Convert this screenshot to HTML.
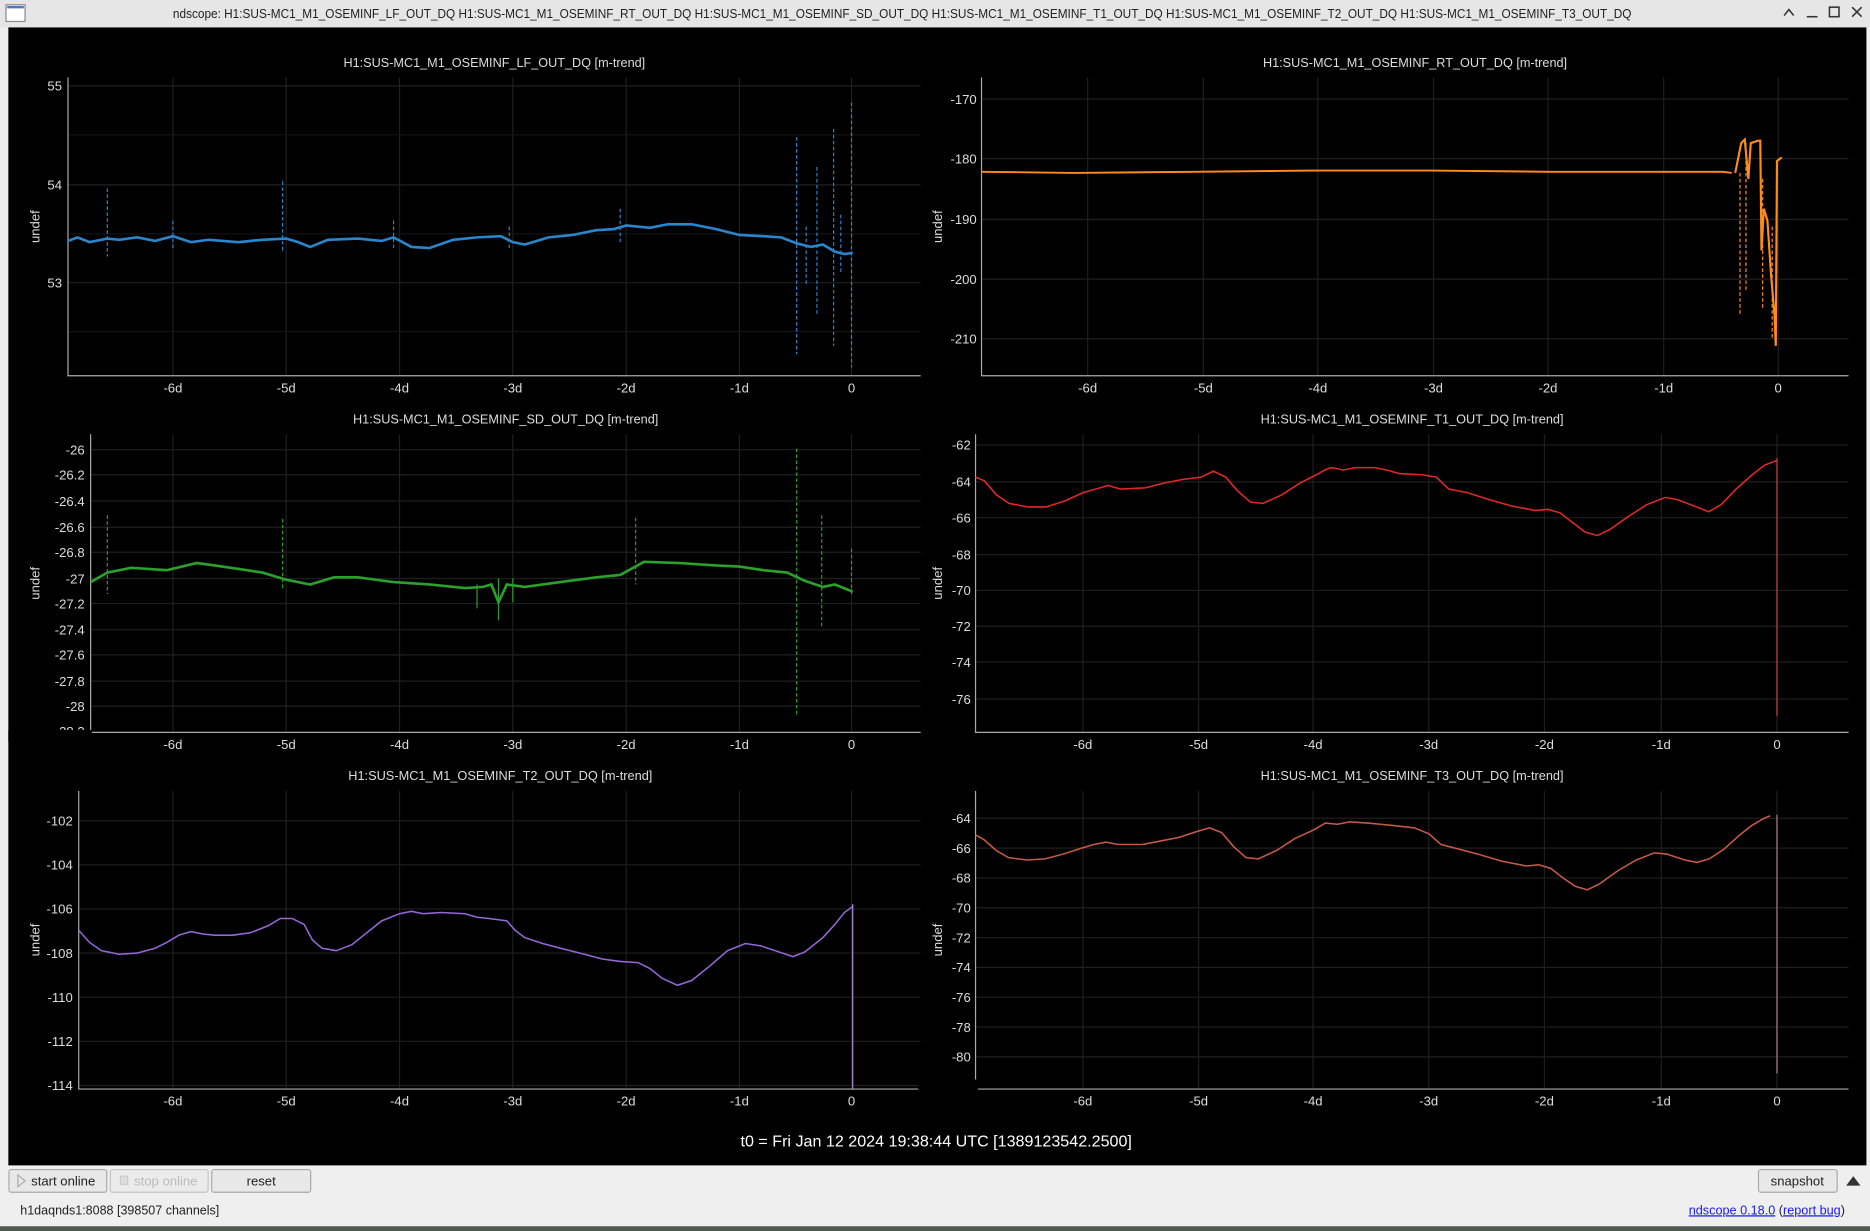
<!DOCTYPE html>
<html><head><meta charset="utf-8"><style>
html,body{margin:0;padding:0;width:1870px;height:1231px;overflow:hidden;background:#efefef;}
svg{display:block}
</style></head><body>
<svg width="1870" height="1231" viewBox="0 0 1568 1032" preserveAspectRatio="none" font-family="Liberation Sans, DejaVu Sans, sans-serif">
<rect x="0" y="0" width="1568" height="23" fill="#e6e6e6"/>
<rect x="5" y="4" width="16" height="14" fill="#fff" stroke="#888" stroke-width="1"/>
<rect x="6" y="5" width="14" height="2" fill="#4a7ac0"/>
<text x="145" y="15" font-size="11" fill="#222" textLength="1223" lengthAdjust="spacingAndGlyphs">ndscope: H1:SUS-MC1_M1_OSEMINF_LF_OUT_DQ H1:SUS-MC1_M1_OSEMINF_RT_OUT_DQ H1:SUS-MC1_M1_OSEMINF_SD_OUT_DQ H1:SUS-MC1_M1_OSEMINF_T1_OUT_DQ H1:SUS-MC1_M1_OSEMINF_T2_OUT_DQ H1:SUS-MC1_M1_OSEMINF_T3_OUT_DQ</text>
<g stroke="#333" stroke-width="1.3" fill="none">
<path d="M1496 13 L1500 8 L1504 13"/><path d="M1515 14 H1524"/><rect x="1534" y="6" width="8" height="8"/><path d="M1553 6 L1561 14 M1561 6 L1553 14"/>
</g>
<rect x="7" y="23" width="1558" height="954" fill="#000"/>

<g font-size="11" fill="#ddd">
<text x="288" y="56" textLength="253" lengthAdjust="spacingAndGlyphs">H1:SUS-MC1_M1_OSEMINF_LF_OUT_DQ [m-trend]</text>
<text x="1059" y="56" textLength="255" lengthAdjust="spacingAndGlyphs">H1:SUS-MC1_M1_OSEMINF_RT_OUT_DQ [m-trend]</text>
<text x="296" y="355" textLength="256" lengthAdjust="spacingAndGlyphs">H1:SUS-MC1_M1_OSEMINF_SD_OUT_DQ [m-trend]</text>
<text x="1057" y="355" textLength="254" lengthAdjust="spacingAndGlyphs">H1:SUS-MC1_M1_OSEMINF_T1_OUT_DQ [m-trend]</text>
<text x="292" y="654" textLength="255" lengthAdjust="spacingAndGlyphs">H1:SUS-MC1_M1_OSEMINF_T2_OUT_DQ [m-trend]</text>
<text x="1057" y="654" textLength="254" lengthAdjust="spacingAndGlyphs">H1:SUS-MC1_M1_OSEMINF_T3_OUT_DQ [m-trend]</text>
</g>

<g stroke="#1f1f1f" stroke-width="1">
<path d="M145 65V315M240 65V315M335 65V315M430 65V315M525 65V315M620 65V315M714 65V315"/>
<path d="M145 364V614M240 364V614M335 364V614M430 364V614M525 364V614M620 364V614M714 364V614"/>
<path d="M145 663V913M240 663V913M335 663V913M430 663V913M525 663V913M620 663V913M714 663V913"/>
<path d="M912 65V315M1009 65V315M1105 65V315M1202 65V315M1298 65V315M1395 65V315M1491 65V315"/>
<path d="M908 364V614M1005 364V614M1101 364V614M1198 364V614M1295 364V614M1393 364V614M1490 364V614"/>
<path d="M908 663V913M1005 663V913M1101 663V913M1198 663V913M1295 663V913M1393 663V913M1490 663V913"/>
<path d="M57 72H772M57 155H772M57 237H772"/>
<path d="M823 83H1550M823 133H1550M823 184H1550M823 234H1550M823 284H1550"/>
<path d="M76 377H772M76 398H772M76 420H772M76 442H772M76 463H772M76 485H772M76 506H772M76 528H772M76 549H772M76 571H772M76 592H772"/>
<path d="M818 373H1550M818 404H1550M818 434H1550M818 465H1550M818 495H1550M818 525H1550M818 555H1550M818 586H1550"/>
<path d="M66 688H772M66 725H772M66 762H772M66 799H772M66 836H772M66 873H772M66 910H772"/>
<path d="M818 686H1550M818 711H1550M818 736H1550M818 761H1550M818 786H1550M818 811H1550M818 836H1550M818 861H1550M818 886H1550"/>
</g>
<g stroke="#141414" stroke-width="1"><path d="M57 113H772M57 196H772M57 278H772"/></g>

<g stroke="#aaa" stroke-width="1" fill="none">
<path d="M57 65V315H772"/><path d="M823 65V315H1550"/>
<path d="M76 364V614H772"/><path d="M818 364V614H1550"/>
<path d="M66 663V913H772"/><path d="M818 663V913H1550"/>
</g>

<g font-size="11" fill="#ddd" text-anchor="middle">
<g><text x="145" y="329">-6d</text><text x="240" y="329">-5d</text><text x="335" y="329">-4d</text><text x="430" y="329">-3d</text><text x="525" y="329">-2d</text><text x="620" y="329">-1d</text><text x="714" y="329">0</text></g>
<g transform="translate(0,299)"><text x="145" y="329">-6d</text><text x="240" y="329">-5d</text><text x="335" y="329">-4d</text><text x="430" y="329">-3d</text><text x="525" y="329">-2d</text><text x="620" y="329">-1d</text><text x="714" y="329">0</text></g>
<g transform="translate(0,598)"><text x="145" y="329">-6d</text><text x="240" y="329">-5d</text><text x="335" y="329">-4d</text><text x="430" y="329">-3d</text><text x="525" y="329">-2d</text><text x="620" y="329">-1d</text><text x="714" y="329">0</text></g>
<text x="912" y="329">-6d</text><text x="1009" y="329">-5d</text><text x="1105" y="329">-4d</text><text x="1202" y="329">-3d</text><text x="1298" y="329">-2d</text><text x="1395" y="329">-1d</text><text x="1491" y="329">0</text>
<g transform="translate(0,299)"><text x="908" y="329">-6d</text><text x="1005" y="329">-5d</text><text x="1101" y="329">-4d</text><text x="1198" y="329">-3d</text><text x="1295" y="329">-2d</text><text x="1393" y="329">-1d</text><text x="1490" y="329">0</text></g>
<g transform="translate(0,598)"><text x="908" y="329">-6d</text><text x="1005" y="329">-5d</text><text x="1101" y="329">-4d</text><text x="1198" y="329">-3d</text><text x="1295" y="329">-2d</text><text x="1393" y="329">-1d</text><text x="1490" y="329">0</text></g>
</g>
<g font-size="11" fill="#ddd" text-anchor="end">
<text x="52" y="76">55</text><text x="52" y="159">54</text><text x="52" y="241">53</text>
<text x="819" y="87">-170</text><text x="819" y="137">-180</text><text x="819" y="188">-190</text><text x="819" y="238">-200</text><text x="819" y="288">-210</text>
<text x="71" y="381">-26</text><text x="71" y="402">-26.2</text><text x="71" y="424">-26.4</text><text x="71" y="446">-26.6</text><text x="71" y="467">-26.8</text><text x="71" y="489">-27</text><text x="71" y="510">-27.2</text><text x="71" y="532">-27.4</text><text x="71" y="553">-27.6</text><text x="71" y="575">-27.8</text><text x="71" y="596">-28</text><text x="71" y="617">-28.2</text>
<text x="814" y="377">-62</text><text x="814" y="408">-64</text><text x="814" y="438">-66</text><text x="814" y="469">-68</text><text x="814" y="499">-70</text><text x="814" y="529">-72</text><text x="814" y="559">-74</text><text x="814" y="590">-76</text>
<text x="61" y="692">-102</text><text x="61" y="729">-104</text><text x="61" y="766">-106</text><text x="61" y="803">-108</text><text x="61" y="840">-110</text><text x="61" y="877">-112</text><text x="61" y="914">-114</text>
<text x="814" y="690">-64</text><text x="814" y="715">-66</text><text x="814" y="740">-68</text><text x="814" y="765">-70</text><text x="814" y="790">-72</text><text x="814" y="815">-74</text><text x="814" y="840">-76</text><text x="814" y="865">-78</text><text x="814" y="890">-80</text><text x="814" y="914">-82</text>
</g>
<rect x="7" y="612" width="70" height="10" fill="#000"/>
<rect x="770" y="905" width="50" height="10" fill="#000"/>
<g font-size="11" fill="#ddd" text-anchor="middle">
<text transform="translate(33,190) rotate(-90)">undef</text>
<text transform="translate(790,190) rotate(-90)">undef</text>
<text transform="translate(33,489) rotate(-90)">undef</text>
<text transform="translate(790,489) rotate(-90)">undef</text>
<text transform="translate(33,788) rotate(-90)">undef</text>
<text transform="translate(790,788) rotate(-90)">undef</text>
</g>

<g fill="none" stroke-width="1">
<g stroke="#2a86cc">
<polyline stroke-width="2.2" points="57,202 65,199 75,203 90,200 100,201 115,199 130,202 145,198 160,203 175,201 200,203 220,201 240,200 250,203 260,207 275,201 300,200 320,202 330,199 345,207 360,208 380,201 400,199 420,198 430,203 440,205 460,199 480,197 500,193 515,192 525,189 545,191 560,188 580,188 600,192 620,197 640,198 655,199 668,204 680,207 690,205 700,211 708,213 715,212"/>
<path stroke-dasharray="3,2" d="M90 158V215M145 185V210M237 152V210M330 185V210M427 190V210M520 175V205M668 115V297M685 140V265M699 108V290M714 86V308M676 190V240M705 180V230"/>
</g>
<g stroke="#ff8c1a">
<polyline stroke-width="1.6" points="823,144 900,145 1000,144 1100,143 1200,143 1300,144 1445,144 1452,145"/>
<polyline stroke-width="1.8" points="1455,145 1460,120 1463,117 1466,150 1468,120 1474,118 1476,118 1477,210 1479,175 1482,185 1485,230 1488,265 1489,290 1490,135 1494,132"/>
<path stroke-dasharray="3,2" d="M1459 145V265M1464 120V245M1478 150V260M1486 190V285"/>
</g>
<g stroke="#2ca02c">
<polyline stroke-width="2.2" points="76,488 90,480 110,476 140,478 165,472 180,474 200,477 220,480 240,486 260,490 280,484 300,484 330,488 360,490 390,493 405,492 412,490 418,505 425,490 440,492 470,488 500,484 520,482 540,471 570,472 600,474 620,475 640,478 660,480 675,487 690,492 700,490 715,496"/>
<path stroke-dasharray="3,2" d="M90 432V498M237 435V495M533 434V490M668 376V600M689 432V525M714 460V500"/>
<path d="M418 485V520M400 490V510M430 485V505"/>
</g>
<g stroke="#e02828">
<polyline stroke-width="1.3" transform="translate(818,0) scale(1.0386,1) translate(-818,0)" points="818,400 825,403 835,415 845,422 860,425 875,425 890,420 905,413 915,410 925,407 935,410 955,409 970,405 985,402 1000,400 1010,395 1020,400 1030,412 1040,421 1050,422 1065,415 1080,405 1095,397 1100,394 1105,392 1115,394 1125,392 1140,392 1150,394 1160,397 1178,398 1190,400 1200,410 1215,413 1230,418 1250,424 1270,428 1280,427 1290,430 1300,438 1310,446 1320,449 1330,444 1345,433 1360,423 1375,417 1385,419 1400,425 1410,429 1420,423 1432,410 1445,398 1455,390 1465,386"/>
<path stroke="#d04040" d="M1490 384V600"/>
</g>
<g stroke="#9467d8">
<polyline stroke-width="1.3" points="66,780 75,790 85,797 100,800 115,799 130,795 140,790 150,784 160,781 170,783 180,784 195,784 210,782 225,776 235,770 245,770 255,775 262,788 270,795 282,797 295,792 305,784 320,772 335,766 345,764 355,766 370,765 390,766 400,769 410,770 425,772 432,780 440,786 455,791 470,795 490,800 505,804 520,806 535,807 545,812 555,820 568,826 580,822 595,810 610,797 625,791 638,793 650,797 665,802 675,798 690,786 700,775 708,765 715,760"/>
<path stroke="#b090e0" d="M715 758V913"/>
</g>
<g stroke="#c65a48">
<polyline stroke-width="1.3" transform="translate(818,0) scale(1.0219,1) translate(-818,0)" points="818,700 825,704 835,713 845,719 860,721 875,720 890,716 905,711 915,708 925,706 935,708 955,708 970,705 985,702 1000,697 1010,694 1020,698 1030,710 1040,719 1050,720 1065,713 1080,703 1095,696 1105,690 1115,691 1125,689 1140,690 1150,691 1160,692 1178,694 1190,699 1200,708 1215,712 1230,716 1250,722 1270,726 1280,725 1290,728 1300,736 1310,743 1320,746 1330,741 1345,730 1360,721 1375,715 1385,716 1400,721 1410,723 1420,720 1432,712 1445,700 1455,692 1465,686 1470,684"/>
<path stroke="#b08080" d="M1490 683V900"/>
</g>
</g>
<text x="785" y="961" font-size="13.5" fill="#fff" text-anchor="middle">t0 = Fri Jan 12 2024 19:38:44 UTC [1389123542.2500]</text>

<g font-size="11" text-anchor="middle">
<rect x="7.5" y="980.5" width="82" height="19" rx="2" fill="#e8e8e8" stroke="#aaa"/>
<path d="M15 985 L21 990 L15 995 Z" fill="none" stroke="#aaa"/>
<text x="53" y="994" fill="#222">start online</text>
<rect x="92.5" y="980.5" width="82" height="19" rx="2" fill="#ebebeb" stroke="#c4c4c4"/>
<rect x="101" y="986" width="6" height="7" fill="#ddd" stroke="#ccc"/>
<text x="139" y="994" fill="#bbb">stop online</text>
<rect x="177.5" y="980.5" width="83" height="19" rx="2" fill="#e8e8e8" stroke="#aaa"/>
<text x="219" y="994" fill="#222">reset</text>
<rect x="1474.5" y="980.5" width="66" height="19" rx="2" fill="#e8e8e8" stroke="#aaa"/>
<text x="1507" y="994" fill="#222">snapshot</text>
<path d="M1548 994 L1554 986 L1560 994 Z" fill="#333"/>
</g>
<text x="17" y="1018" font-size="10.5" fill="#222">h1daqnds1:8088  [398507 channels]</text>
<text x="1416" y="1018" font-size="10.5" fill="#222" textLength="131" lengthAdjust="spacingAndGlyphs"><tspan fill="#1a1aee" text-decoration="underline">ndscope 0.18.0</tspan> (<tspan fill="#1a1aee" text-decoration="underline">report bug</tspan>)</text>
<rect x="0" y="1028" width="1568" height="4" fill="#505850"/>
</svg>
</body></html>
